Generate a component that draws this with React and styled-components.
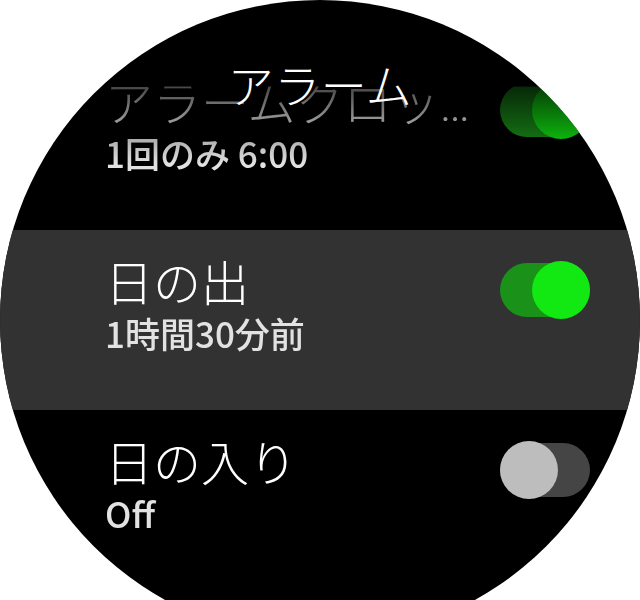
import React from "react";
import styled, { createGlobalStyle } from "styled-components";

const GlobalStyle = createGlobalStyle`
  html, body {
    margin: 0;
    padding: 0;
    background: #ffffff;
    overflow: hidden;
  }
  body {
    font-family: "Noto Sans CJK JP", "Noto Sans", sans-serif;
  }
`;

const Page = styled.div`
  width: 640px;
  height: 600px;
  overflow: hidden;
  background: #ffffff;
`;

const Watch = styled.div`
  position: relative;
  width: 640px;
  height: 640px;
  border-radius: 50%;
  background: #000000;
  overflow: hidden;
`;

const Header = styled.div`
  position: absolute;
  top: 54px;
  left: 0;
  right: 0;
  text-align: center;
  font-size: 46px;
  line-height: 58px;
  font-weight: 300;
  color: #ffffff;
  letter-spacing: 0.5px;
  z-index: 2;
`;

const List = styled.div`
  display: flex;
  flex-direction: column;
  padding-top: 50px;
  -webkit-mask-image: linear-gradient(
    to bottom,
    transparent 0px,
    transparent 86px,
    rgba(0, 0, 0, 0.28) 87px,
    #000 164px
  );
  mask-image: linear-gradient(
    to bottom,
    transparent 0px,
    transparent 86px,
    rgba(0, 0, 0, 0.28) 87px,
    #000 164px
  );
`;

const Row = styled.div`
  height: 180px;
  box-sizing: border-box;
  display: flex;
  align-items: flex-start;
  justify-content: space-between;
  padding: 28px 50px 0 105px;
  background: ${(p) => (p.$selected ? "#323232" : "transparent")};
`;

const TextCol = styled.div`
  display: flex;
  flex-direction: column;
  min-width: 0;
  flex: 1;
`;

const Title = styled.div`
  font-family: "Roboto", "Noto Sans CJK JP", sans-serif;
  font-size: 48px;
  line-height: 54px;
  font-weight: 300;
  color: #ffffff;
  white-space: nowrap;
  overflow: hidden;
  text-overflow: ellipsis;
  max-width: 372px;
`;

const Subtitle = styled.div`
  font-size: 35px;
  line-height: 42px;
  font-weight: 500;
  color: #e2e2e2;
  white-space: nowrap;
`;

const Toggle = styled.div`
  position: relative;
  flex: none;
  width: 90px;
  height: 58px;
  margin-top: 3px;
`;

const Track = styled.div`
  position: absolute;
  left: 0;
  right: 0;
  top: 2px;
  height: 54px;
  border-radius: 27px;
  background: ${(p) => (p.$on ? "#1a921a" : "#454545")};
`;

const Thumb = styled.div`
  position: absolute;
  top: 0;
  ${(p) => (p.$on ? "right: 0;" : "left: 0;")}
  width: 58px;
  height: 58px;
  border-radius: 50%;
  background: ${(p) => (p.$on ? "#12e812" : "#bdbdbd")};
`;

const items = [
  { title: "アラームクロック", sub: "1回のみ 6:00", on: true },
  { title: "日の出", sub: "1時間30分前", on: true, selected: true },
  { title: "日の入り", sub: "Off", on: false },
];

export default function App() {
  return (
    <Page lang="ja">
      <GlobalStyle />
      <Watch>
        <Header>アラーム</Header>
        <List>
          {items.map((it) => (
            <Row key={it.title} $selected={it.selected}>
              <TextCol>
                <Title>{it.title}</Title>
                <Subtitle>{it.sub}</Subtitle>
              </TextCol>
              <Toggle>
                <Track $on={it.on} />
                <Thumb $on={it.on} />
              </Toggle>
            </Row>
          ))}
        </List>
      </Watch>
    </Page>
  );
}
